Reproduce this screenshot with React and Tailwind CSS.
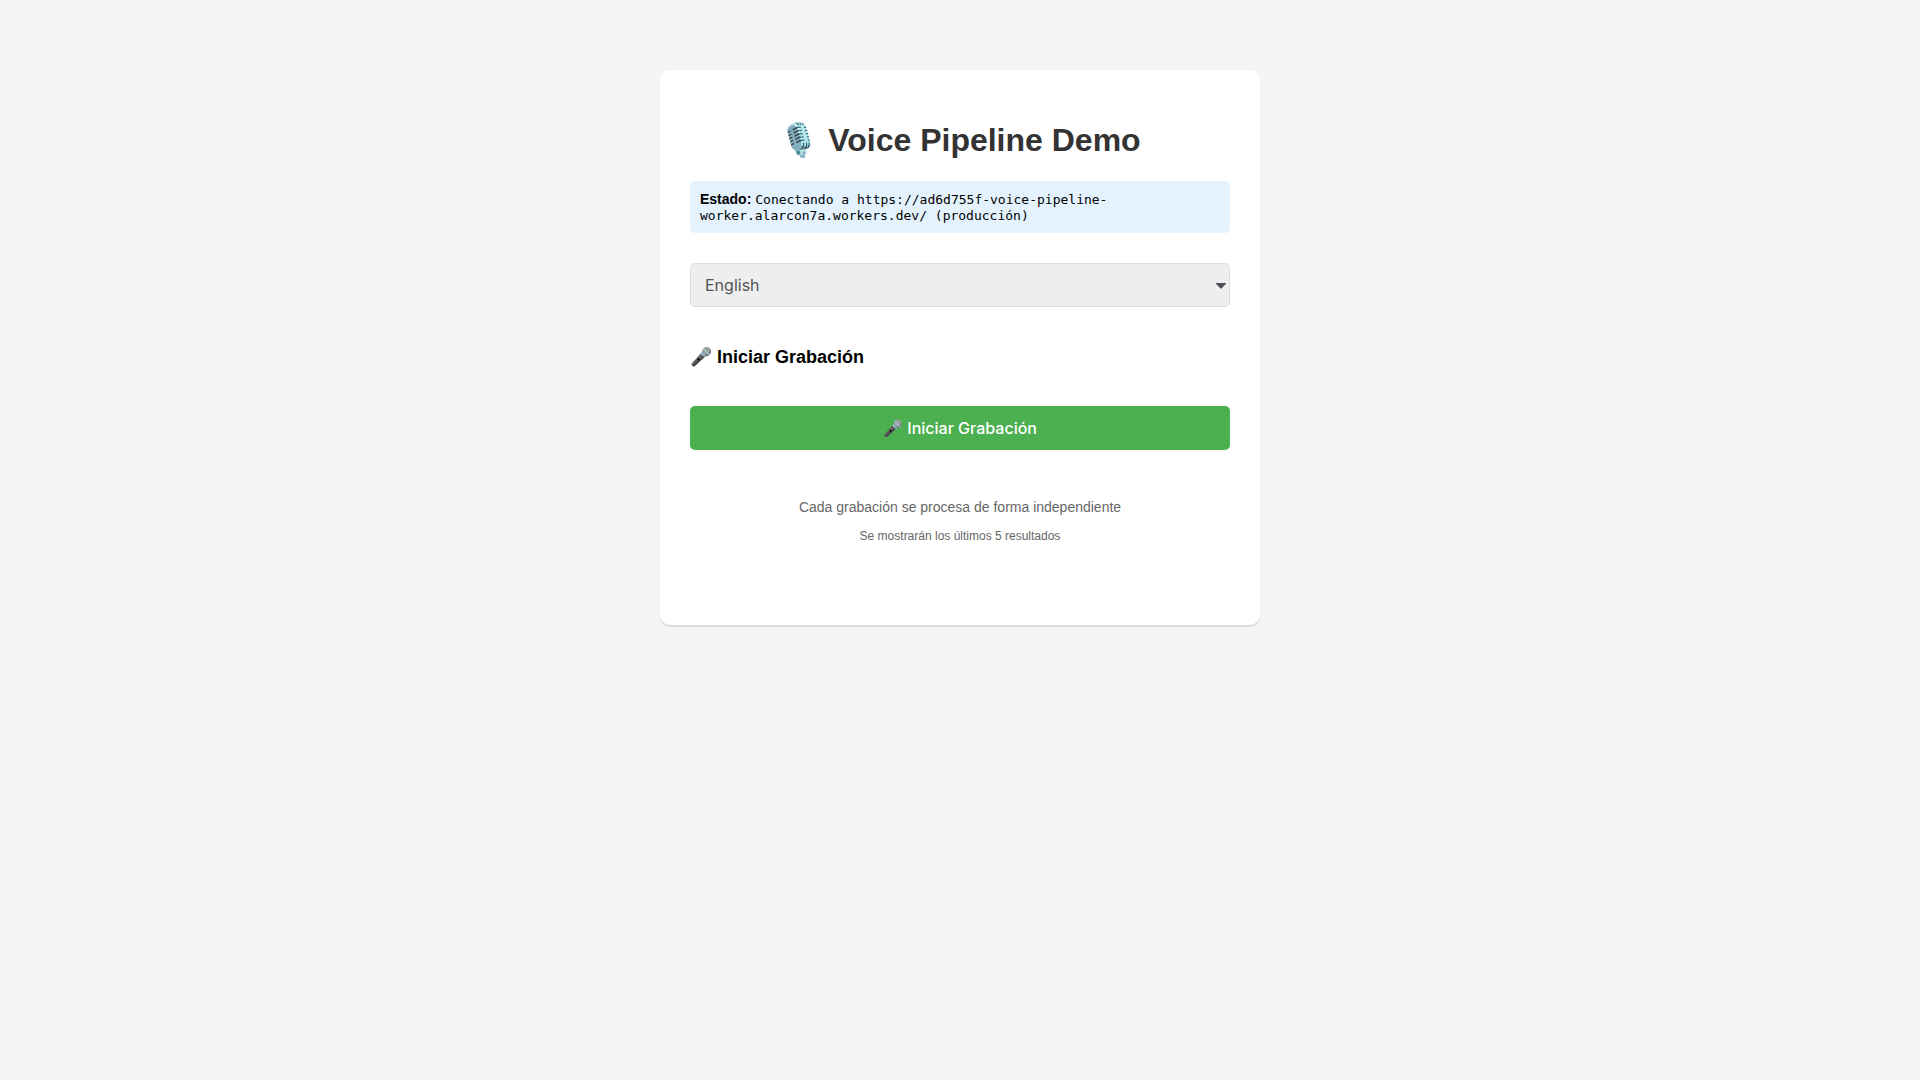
import { useState } from 'react';

const LANGUAGES = [
    { value: 'en', label: 'English' },
    { value: 'es', label: 'Español' },
    { value: 'fr', label: 'Français' },
];

export default function App() {
    const [language, setLanguage] = useState('en');

    return (
        <div className="min-h-screen bg-[#f5f5f5] px-5 py-[70px] font-['Liberation_Sans',Arial,sans-serif] text-black">
            <main className="mx-auto flow-root max-w-[600px] rounded-[10px] bg-white px-[30px] pt-[30px] pb-[81px] shadow-[0_2px_0_rgba(0,0,0,0.1)]">
                <h1 className="my-[21px] text-center text-[32px] leading-[39px] font-bold text-[#333]">🎙️ Voice Pipeline Demo</h1>

                <div className="rounded-[5px] bg-[#e3f2fd] p-2.5 text-sm leading-4">
                    <strong>Estado:</strong>{' '}
                    <span className="font-['DejaVu_Sans_Mono',monospace] text-[13px] leading-none">
                        Conectando a https://ad6d755f-voice-pipeline-worker.alarcon7a.workers.dev/ (producción)
                    </span>
                </div>

                <div className="relative mt-[30px]">
                    <select
                        aria-label="Idioma"
                        value={language}
                        onChange={(e) => setLanguage(e.target.value)}
                        disabled
                        className="block h-11 w-full appearance-none rounded-[5px] border border-[#ddd] bg-[#eee] px-3.5 font-['Inter',sans-serif] text-base text-[#545454] opacity-100"
                    >
                        {LANGUAGES.map((lang) => (
                            <option key={lang.value} value={lang.value}>{lang.label}</option>
                        ))}
                    </select>
                    <svg className="pointer-events-none absolute top-5 right-1 h-1.5 w-2.5" viewBox="0 0 10 6" fill="#4d5156" aria-hidden="true">
                        <path d="M0 0h10v.8L5.5 5.4h-1L0 .8z" />
                    </svg>
                </div>

                <h3 className="mt-10 mb-[38px] text-lg leading-[21px] font-bold">🎤 Iniciar Grabación</h3>

                <button type="button" className="block h-11 w-full rounded-[5px] bg-[#4caf50] font-['Inter',sans-serif] text-base font-medium text-white">
                    🎤 Iniciar Grabación
                </button>

                <div className="mt-12 text-center text-[#666]">
                    <p className="text-sm leading-[18px]">Cada grabación se procesa de forma independiente</p>
                    <p className="mt-3 text-xs leading-4">Se mostrarán los últimos 5 resultados</p>
                </div>
            </main>
        </div>
    );
}
